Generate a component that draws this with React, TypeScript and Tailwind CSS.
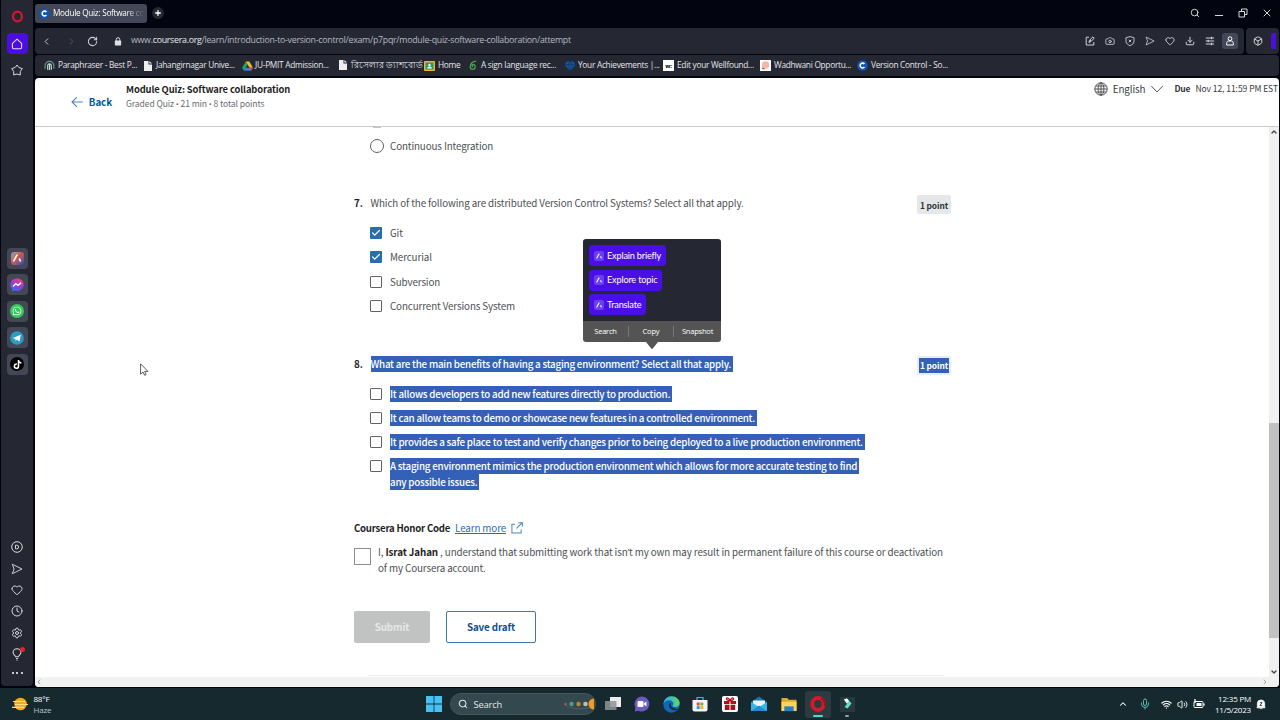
import type { ReactNode } from 'react';
import {
  Camera,
  Check,
  ChevronDown,
  ChevronLeft,
  ChevronRight,
  ChevronUp,
  Clock,
  Download,
  Heart,
  Mic,
  Plus,
  RotateCw,
  Search,
  Settings,
  Volume2,
  Wifi,
  X,
  Box,
} from 'lucide-react';
import { FaTiktok, FaWhatsapp } from 'react-icons/fa';

const bookmarks = [
  { label: 'Paraphraser - Best P...', icon: 'quill', width: 'w-[100px]', gap: 'gap-[3px]' },
  { label: 'Jahangirnagar Unive...', icon: 'file', width: 'w-[98px]', gap: 'gap-[4px]' },
  { label: 'JU-PMIT Admission...', icon: 'drive', width: 'w-[97px]', gap: 'gap-[2px]' },
  { label: 'রিসেলার ড্যাশবোর্ড', icon: 'file', width: 'w-[85px] text-[8.7px] tracking-normal', gap: 'gap-[4px]' },
  { label: 'Home', icon: 'classroom', width: 'w-[44px]', gap: 'gap-[3px]' },
  { label: 'A sign language rec...', icon: 'leaf', width: 'w-[96px]', gap: 'gap-[3px]' },
  { label: 'Your Achievements |...', icon: 'gem', width: 'w-[99px]', gap: 'gap-[2px]' },
  { label: 'Edit your Wellfound...', icon: 'well', width: 'w-[97px]', gap: 'gap-[3px]' },
  { label: 'Wadhwani Opportu...', icon: 'wadhwani', width: 'w-[97px]', gap: 'gap-[3px]' },
  { label: 'Version Control - So...', icon: 'coursera', width: 'w-[100px]', gap: 'gap-[3px]' },
];

const q7 = [
  { label: 'Git', checked: true },
  { label: 'Mercurial', checked: true },
  { label: 'Subversion', checked: false },
  { label: 'Concurrent Versions System', checked: false },
];

const q8 = [
  'It allows developers to add new features directly to production.',
  'It can allow teams to demo or showcase new features in a controlled environment.',
  'It provides a safe place to test and verify changes prior to being deployed to a live production environment.',
];

function CourseraMark() {
  return (
    <svg viewBox="0 0 12 12" className="size-[11px] shrink-0">
      <circle cx="6" cy="6" r="5.8" fill="#0f55b8" />
      <path d="M8.1 4.4A2.6 2.6 0 1 0 8.1 7.6" fill="none" stroke="#fff" strokeWidth="1.7" />
    </svg>
  );
}

function BookmarkIcon({ name }: { name: string }) {
  switch (name) {
    case 'quill':
      return (
        <svg viewBox="0 0 12 12" className="size-[11px] shrink-0" fill="none" strokeWidth="1.3">
          <path d="M1.2 9.5V6.2A4.8 4.8 0 0 1 10.8 6.2V9.5" stroke="#5b9c8a" />
          <path d="M4 10.5V6.3a2 2 0 0 1 4 0v4.2M6 4v7" stroke="#b9d8cd" />
        </svg>
      );
    case 'file':
      return (
        <svg viewBox="0 0 8 10" className="h-[10px] w-[8px] shrink-0">
          <path d="M0 0h4.5v3.5H8V10H0z" fill="#eee" />
          <path d="M5.4 0L8 2.6H5.4z" fill="#eee" />
        </svg>
      );
    case 'drive':
      return (
        <svg viewBox="0 0 12 11" className="h-[10px] w-[11px] shrink-0">
          <path d="M4 .5h4L12 7.4H8.3z" fill="#f6bd16" />
          <path d="M4 .5L6.1 4 2.1 10.7 0 7.4z" fill="#24a35a" />
          <path d="M4 7.4h8l-2.1 3.3H2.1z" fill="#3c7be8" />
          <path d="M8.3 7.4H12l-2.1 3.3z" fill="#e8453c" />
        </svg>
      );
    case 'classroom':
      return (
        <svg viewBox="0 0 11 10" className="h-[10px] w-[11px] shrink-0">
          <rect width="11" height="10" rx="1" fill="#f0b92c" />
          <rect x="1.4" y="1.4" width="8.2" height="7.2" fill="#2e9a56" />
          <circle cx="5.5" cy="4" r="1.2" fill="#fff" />
          <path d="M3.2 7.4c0-2.4 4.6-2.4 4.6 0z" fill="#fff" />
        </svg>
      );
    case 'leaf':
      return (
        <svg viewBox="0 0 10 12" className="h-[11px] w-[10px] shrink-0" fill="none" stroke="#46a84b" strokeWidth="1.4">
          <path d="M8.3 1.2C4.6 1.6 2 4.2 2 7.6a2.7 2.7 0 1 0 2.9-2.8C3.6 5 3.8 7 5 7.4" />
        </svg>
      );
    case 'gem':
      return (
        <svg viewBox="0 0 12 11" className="h-[10px] w-[12px] shrink-0">
          <path d="M2.5.5h7L12 4 6 11 0 4z" fill="#15569f" />
          <path d="M0 4h12M3.5 4L6 .5 8.5 4 6 11z" fill="none" stroke="#0c2f60" strokeWidth=".7" />
        </svg>
      );
    case 'well':
      return (
        <span className="flex size-[11px] shrink-0 items-center justify-center bg-white text-[6px] leading-none font-bold text-black">
          w:
        </span>
      );
    case 'wadhwani':
      return (
        <svg viewBox="0 0 11 11" className="size-[11px] shrink-0">
          <rect width="11" height="11" fill="#fff" />
          <circle cx="5.5" cy="5" r="3.7" fill="#efb9a6" />
          <path d="M2 8l2.5 1" stroke="#c33" strokeWidth="1.2" />
        </svg>
      );
    default:
      return <CourseraMark />;
  }
}

function AriaMark({ className }: { className: string }) {
  return (
    <svg viewBox="0 0 10 10" className={className} fill="none" stroke="#fff" strokeWidth="1.4" strokeLinecap="round">
      <path d="M2.3 7.4L5 2.6M7.1 5.9L7.8 7.3" />
    </svg>
  );
}

function SideTile({ children }: { children: ReactNode }) {
  return <div className="flex size-[21px] items-center justify-center rounded-[4px] bg-[#434756]">{children}</div>;
}

function SendIcon({ className }: { className: string }) {
  return (
    <svg viewBox="0 0 14 14" className={className} fill="none" stroke="currentColor" strokeWidth="1.1" strokeLinejoin="round">
      <path d="M1.5 1.5L12.8 7 1.5 12.5 3.6 7z" />
    </svg>
  );
}

function Sidebar() {
  return (
    <aside className="ml-px flex h-[686px] w-[32px] shrink-0 flex-col items-center rounded-b-[4px] bg-[#252833] text-[#d6d8de]">
      <svg viewBox="0 0 12 12" className="mt-[10px] size-[13px]" fill="none" stroke="#d9142f">
        <ellipse cx="6" cy="6" rx="4.1" ry="4.5" strokeWidth="2" />
      </svg>
      <div className="mt-[10px] flex size-[21px] items-center justify-center rounded-[4px] bg-[#4a0fe0]">
        <svg viewBox="0 0 12 12" className="size-[12px]" fill="none" stroke="#e6dcff" strokeWidth="1.1" strokeLinejoin="round">
          <path d="M1.4 5.3L6 1.2l4.6 4.1V9.6a1.2 1.2 0 0 1-1.2 1.2H2.6a1.2 1.2 0 0 1-1.2-1.2z" />
        </svg>
      </div>
      <svg viewBox="0 0 12 12" className="mt-[10px] size-[12px]" fill="none" stroke="currentColor" strokeWidth="1" strokeLinejoin="round">
        <path d="M6 1L7.8 3.5 11.3 4.6 9.3 7.4 9.3 11 6 10 2.7 11 2.7 7.4.7 4.6 4.2 3.5z" />
      </svg>

      <div className="mt-[171.5px] flex flex-col gap-[5.6px]">
        <SideTile>
          <span className="flex size-[13px] items-center justify-center rounded-[3px] bg-linear-to-br from-[#64a5c0] via-[#d5523f] via-45% to-[#1b33c7]">
            <AriaMark className="size-[12px]" />
          </span>
        </SideTile>
        <SideTile>
          <svg viewBox="0 0 14 14" className="size-[14px]">
            <defs>
              <linearGradient id="msg" x1="0.2" y1="1" x2="0.7" y2="0">
                <stop offset="0" stopColor="#1a7df5" />
                <stop offset="0.5" stopColor="#9a35e8" />
                <stop offset="1" stopColor="#f0486f" />
              </linearGradient>
            </defs>
            <path d="M7 .4C3.1.4.3 3.2.3 6.7c0 1.9.8 3.5 2 4.6v2.3l2.2-1.1c.8.3 1.6.4 2.5.4 3.9 0 6.7-2.8 6.7-6.2S10.9.4 7 .4z" fill="url(#msg)" />
            <path d="M3 8.6L5.7 5.7 8 7.4 11 4.9" fill="none" stroke="#fff" strokeWidth="1.5" />
          </svg>
        </SideTile>
        <SideTile>
          <span className="flex size-[14px] items-center justify-center rounded-full bg-[#32cb59] text-white">
            <FaWhatsapp size={10} />
          </span>
        </SideTile>
        <SideTile>
          <svg viewBox="0 0 14 14" className="size-[14px]">
            <circle cx="7" cy="7" r="6.8" fill="#2c9cc4" />
            <path d="M2.8 7L10.8 3.8 9.5 10.5 6.8 8.7 5.6 9.9 5.3 7.9z" fill="#fff" />
          </svg>
        </SideTile>
        <SideTile>
          <span className="flex size-[14px] items-center justify-center rounded-full bg-black text-white">
            <FaTiktok size={9} />
          </span>
        </SideTile>
      </div>

      <div className="mt-[166.5px] flex flex-col items-center gap-[9.3px]">
        <svg viewBox="0 0 12 12" className="size-[12px]" fill="none" stroke="currentColor" strokeWidth="1">
          <circle cx="6" cy="6" r="5.3" />
          <path d="M4.5 4.2h1.3a1.8 1.8 0 0 1 0 3.6H4.5z" />
        </svg>
        <SendIcon className="size-[12px]" />
        <Heart className="size-[12px]" strokeWidth={2} />
        <Clock className="size-[12px]" strokeWidth={2} />
        <Settings className="size-[12px]" strokeWidth={2} />
        <div className="relative">
          <svg viewBox="0 0 12 14" className="h-[13px] w-[12px]" fill="none" stroke="currentColor" strokeWidth="1.1">
            <path d="M4.5 9.3C4.5 8 1.8 7.4 1.8 4.9a4.2 4.2 0 0 1 8.4 0C10.2 7.4 7.5 8 7.5 9.3zM5 11.3h2M5.3 13h1.4" />
          </svg>
          <span className="absolute -top-px right-[-2px] size-[5px] rounded-full bg-[#e8232d]" />
        </div>
        <div className="mt-[2px] flex gap-[2.5px]">
          <span className="size-[2px] rounded-full bg-white" />
          <span className="size-[2px] rounded-full bg-white" />
          <span className="size-[2px] rounded-full bg-white" />
        </div>
      </div>
    </aside>
  );
}

function TabStrip() {
  return (
    <div className="flex h-[28px] items-center text-white">
      <div className="mt-[-2px] flex h-[19px] w-[112px] items-center gap-[3px] rounded-[3px] bg-[#434757] pl-[4px]">
        <CourseraMark />
        <span className="mask-r-from-80% text-[8.2px] tracking-[-0.27px] whitespace-nowrap">Module Quiz: Software co</span>
      </div>
      <div className="mt-[-2px] ml-[5px] flex size-[12px] items-center justify-center rounded-full bg-[#252833]">
        <Plus className="size-[8px]" strokeWidth={4} />
      </div>
      <div className="mt-[-3px] mr-[6px] ml-auto flex items-center gap-[15px] text-[#d6d8de]">
        <Search className="size-[10px]" strokeWidth={2.3} />
        <span className="mt-[6px] h-px w-[8px] bg-[#d6d8de]" />
        <svg viewBox="0 0 10 10" className="size-[10px]" fill="none" stroke="currentColor">
          <path d="M1 3.5h5.5V9H1zM3.5 3.5V1H9v5.5H6.5" />
        </svg>
        <X className="-ml-[2px] size-[12px]" strokeWidth={2} />
      </div>
    </div>
  );
}

function AddressBar() {
  return (
    <div className="flex h-[26px] gap-[2px] text-[#cfd1d8]">
      <div className="flex w-[1209px] items-center rounded-[4px] bg-[#252833]">
        <ChevronLeft className="ml-[6px] size-[11px]" />
        <ChevronRight className="ml-[14px] size-[11px] text-[#565a67]" />
        <RotateCw className="ml-[10px] size-[11px]" strokeWidth={2.2} />
        <svg viewBox="0 0 8 10" className="ml-[16px] h-[9px] w-[8px] text-[#dddfe4]">
          <rect x=".5" y="4" width="7" height="5.5" rx=".8" fill="currentColor" />
          <path d="M2 4.5V2.8a2 2 0 0 1 4 0v1.7" fill="none" stroke="currentColor" strokeWidth="1.1" />
        </svg>
        <span className="ml-[9px] text-[8.8px] tracking-[-0.27px] whitespace-nowrap text-[#b5b8c2]">
          www.<span className="text-[#e9eaee]">coursera.org</span>
          /learn/introduction-to-version-control/exam/p7pqr/module-quiz-software-collaboration/attempt
        </span>
        <div className="mr-[6px] ml-auto flex items-center gap-[10px]">
          <svg viewBox="0 0 10 10" className="size-[10px]" fill="none" stroke="currentColor" strokeWidth="1">
            <path d="M4 1.2H1.2V9h7.6V6M4 6.3l.4-1.9L8 .8l1.3 1.3-3.5 3.6zM4 6.3L6 4" />
          </svg>
          <Camera className="size-[10px]" />
          <svg viewBox="0 0 10 10" className="size-[10px]" fill="none" stroke="currentColor" strokeWidth=".9">
            <path d="M5 .6l4 1.1v3.5C9 7.5 7 9 5 9.6 3 9 1 7.5 1 5.2V1.7zM3.8 3.8l2.4 2.4M6.2 3.8L3.8 6.2" />
          </svg>
          <SendIcon className="size-[10px]" />
          <Heart className="size-[10px]" strokeWidth={2.2} />
          <Download className="size-[10px]" strokeWidth={2.4} />
          <svg viewBox="0 0 10 10" className="size-[10px]" stroke="currentColor" strokeWidth="1.1">
            <path d="M.8 2h8.4M.8 5h8.4M.8 8h8.4M6.5.8v2.4M3.2 3.8v2.4M6.5 6.8v2.4" />
          </svg>
          <div className="-ml-[3px] flex size-[16px] items-center justify-center rounded-[3px] bg-[#434757] text-white">
            <svg viewBox="0 0 10 10" className="size-[10px]" fill="none" stroke="currentColor" strokeWidth="1">
              <circle cx="5" cy="2.7" r="1.9" />
              <path d="M3.5 5h3C8 5 8.6 7 8.3 9H1.7C1.4 7 2 5 3.5 5z" />
            </svg>
          </div>
        </div>
      </div>
      <div className="flex w-[33px] items-center rounded-[4px] bg-[#252833]">
        <Box className="ml-[7px] size-[10px]" strokeWidth={2.4} />
        <span className="ml-auto h-[16px] w-[5px] rounded-l-[2px] bg-[#4a12d8]" />
        <span className="w-[3px]" />
      </div>
    </div>
  );
}

function BookmarksBar() {
  return (
    <div className="mt-px flex h-[21px] items-center rounded-[4px] bg-[#252833] pl-[9px] text-[8.3px] tracking-[-0.27px] text-[#e4e5ea]">
      {bookmarks.map((b) => (
        <div key={b.label} className={`flex shrink-0 items-center whitespace-nowrap ${b.width} ${b.gap}`}>
          <BookmarkIcon name={b.icon} />
          <span>{b.label}</span>
        </div>
      ))}
    </div>
  );
}

// the CJK face draws • and ’ full-width, so these come from a Latin font
function Dot() {
  return <span className="font-['Open_Sans',sans-serif] text-[8px]">•</span>;
}

function QuizHeader() {
  return (
    <header className="flex h-[49px] shrink-0 border-b border-[#c9c9c9] text-[#373a3c]">
      <div className="mt-[17px] ml-[36px] flex h-[14px] w-[41px] items-center gap-[6px] text-[#0056a8]">
        <svg viewBox="0 0 12 12" className="size-[12px]" fill="none" stroke="#4d86ba" strokeWidth="1.1">
          <path d="M12 6H1M6 1L1 6l5 5" />
        </svg>
        <span className="text-[9.8px] font-bold tracking-[-0.1px]">Back</span>
      </div>
      <div className="mt-[4px] ml-[14px] flex flex-col whitespace-nowrap">
        <span className="text-[9.4px] leading-[14px] font-semibold tracking-[-0.12px] text-[#1f1f1f]">
          Module Quiz: Software collaboration
        </span>
        <span className="text-[8.6px] leading-[15px] tracking-[-0.11px] text-[#6b6d70]">
          Graded Quiz <Dot /> 21 min <Dot /> 8 total points
        </span>
      </div>
      <div className="mt-[4px] ml-auto flex h-[14px] items-center whitespace-nowrap">
        <svg viewBox="0 0 14 14" className="size-[14px]" fill="none" stroke="#444" strokeWidth=".9">
          <circle cx="7" cy="7" r="6.2" />
          <ellipse cx="7" cy="7" rx="2.9" ry="6.2" />
          <path d="M7 .8v12.4M.8 7h12.4M1.7 4h10.6M1.7 10h10.6" />
        </svg>
        <span className="ml-[5px] text-[9.8px] tracking-[-0.1px]">English</span>
        <svg viewBox="0 0 12 8" className="ml-[6px] h-[8px] w-[12px]" fill="none" stroke="#444" strokeWidth=".9">
          <path d="M.3 1L6 7l5.7-6" />
        </svg>
        <span className="-mt-[2px] ml-[11px] text-[8.5px] font-bold tracking-[-0.15px]">Due</span>
        <span className="-mt-[2px] mr-px ml-[5px] text-[8.5px] tracking-[-0.05px]">Nov 12, 11:59 PM EST</span>
      </div>
    </header>
  );
}

function Checkbox({ checked = false }: { checked?: boolean }) {
  return checked ? (
    <span className="flex size-[12px] shrink-0 items-center justify-center rounded-[1px] bg-[#2a6cb0] text-white">
      <Check className="size-[10px]" strokeWidth={3} />
    </span>
  ) : (
    <span className="size-[12px] shrink-0 rounded-[1px] border-[1.5px] border-[#5f6164] bg-white" />
  );
}

function Marked({ children }: { children: ReactNode }) {
  return (
    <span className="inline-block h-[16px] bg-[#3461b8] pr-[2px] font-medium tracking-[-0.23px] text-white">{children}</span>
  );
}

function Quiz() {
  return (
    <div className="flex flex-1 flex-col overflow-hidden pl-[319px] text-[9.8px] leading-[16px] tracking-[-0.11px] whitespace-nowrap text-[#4c4f52]">
      <div className="ml-[19px] h-px w-[8px] shrink-0 bg-[#c4c4c4]" />
      <div className="mt-[10px] ml-[15.5px] flex h-[16px] items-center gap-[6.5px]">
        <span className="-mt-px size-[14px] rounded-full border-[1.5px] border-[#5f6164]" />
        <span>Continuous Integration</span>
      </div>

      <div className="mt-[41px] flex h-[19px] w-[597px]">
        <span className="w-[16.5px] font-bold text-[#1f1f1f]">7.</span>
        <span>Which of the following are distributed Version Control Systems? Select all that apply.</span>
        <span className="ml-auto flex h-[19px] w-[34px] items-center justify-center rounded-[2px] bg-[#e5e8ea] text-[8.4px] font-bold text-[#333]">
          1 point
        </span>
      </div>
      <div className="mt-[11.3px] ml-[16.4px] flex flex-col gap-[8.2px]">
        {q7.map((o) => (
          <div key={o.label} className="flex h-[16px] items-center gap-[7.6px]">
            <Checkbox checked={o.checked} />
            <span>{o.label}</span>
          </div>
        ))}
      </div>

      <div className="mt-[41.7px] flex h-[19px] w-[597px]">
        <span className="w-[16.5px] font-bold text-[#1f1f1f]">8.</span>
        <Marked>What are the main benefits of having a staging environment? Select all that apply.</Marked>
        <span className="ml-auto flex h-[19px] w-[34px] items-center justify-center rounded-[2px] bg-[#e5edf7]">
          <span className="h-[15px] bg-[#3461b8] px-px text-[8.4px] leading-[15px] font-bold text-white">1 point</span>
        </span>
      </div>
      <div className="mt-[11px] ml-[16.4px] flex flex-col gap-[8px]">
        {q8.map((label) => (
          <div key={label} className="flex h-[16px] items-center gap-[7.6px]">
            <Checkbox />
            <Marked>{label}</Marked>
          </div>
        ))}
        <div className="flex gap-[7.6px]">
          <span className="flex h-[16px] items-center">
            <Checkbox />
          </span>
          <div className="flex flex-col items-start">
            <Marked>A staging environment mimics the production environment which allows for more accurate testing to find</Marked>
            <Marked>any possible issues.</Marked>
          </div>
        </div>
      </div>

      <div className="mt-[30px] flex h-[16px] items-center">
        <span className="text-[9.6px] font-semibold tracking-[-0.23px] text-[#1f1f1f]">Coursera Honor Code</span>
        <span className="ml-[5px] text-[#2a6cb0] underline underline-offset-1">Learn more</span>
        <svg viewBox="0 0 13 13" className="ml-[5px] size-[12px]" fill="none" stroke="#4d86ba" strokeWidth="1.1">
          <path d="M4.5 2.5H1V12h10V8M8 .7h4.3V5M12.3.7L6 7" />
        </svg>
      </div>
      <div className="mt-[8px] flex h-[32px]">
        <span className="mt-[4px] size-[17px] shrink-0 border border-[#8a8c8e]" />
        <div className="ml-[7px] flex flex-col">
          <div className="h-[16px] tracking-[-0.105px]">
            I, <b className="text-[#1f1f1f]">Israt Jahan</b> , understand that submitting work that isn
            <span className="font-['Open_Sans',sans-serif] leading-none">’</span>t my own may result in permanent failure of this
            course or deactivation
          </div>
          <div>of my Coursera account.</div>
        </div>
      </div>

      <div className="mt-[35px] flex gap-[16px] font-bold">
        <button className="h-[32px] w-[76px] rounded-[2px] bg-[#c1c3c3] text-[#e6e7e7]">Submit</button>
        <button className="h-[32px] w-[90px] rounded-[2px] border border-[#3f76ac] text-[#0f4f94]">Save draft</button>
      </div>
      <div className="mt-[32px] ml-[14px] h-px w-[576px] shrink-0 bg-[#ececec]" />
    </div>
  );
}

function SelectionPopup() {
  return (
    <div className="absolute top-[239px] left-[583px] w-[138px] font-['Lato',sans-serif]">
      <div className="flex h-[82px] flex-col items-start gap-[4px] rounded-t-[3px] bg-[#252833] pt-[6px] pl-[6px]">
        {['Explain briefly', 'Explore topic', 'Translate'].map((label) => (
          <button
            key={label}
            className="-mb-[0.3px] flex h-[21px] items-center gap-[3px] rounded-[4px] bg-[#4a0fe8] pr-[5px] pl-[5px] text-[9.2px] tracking-[-0.2px] text-white"
          >
            <span className="flex size-[10px] items-center justify-center rounded-[2px] bg-[#6a3ff0]">
              <AriaMark className="size-[8px]" />
            </span>
            {label}
          </button>
        ))}
      </div>
      <div className="flex h-[21px] items-center rounded-b-[3px] bg-[#545454] font-['Open_Sans',sans-serif] text-[7.5px] tracking-[-0.2px] text-white">
        <span className="w-[45px] text-center">Search</span>
        <span className="h-[11px] w-px bg-[#777]" />
        <span className="w-[44px] text-center">Copy</span>
        <span className="h-[11px] w-px bg-[#777]" />
        <span className="w-[47px] text-center">Snapshot</span>
      </div>
      <svg viewBox="0 0 12 7" className="ml-[63px] h-[7px] w-[12px]">
        <path d="M0 0h12L7 6.3a1.3 1.3 0 0 1-2 0z" fill="#545454" />
      </svg>
    </div>
  );
}

function TaskbarApps() {
  return (
    <div className="flex items-center">
      <svg viewBox="0 0 16 16" className="size-[16px]">
        <path d="M0 0h7.6v7.6H0zM8.4 0H16v7.6H8.4zM0 8.4h7.6V16H0zM8.4 8.4H16V16H8.4z" fill="#45c1f5" />
      </svg>
      <div className="ml-[8px] flex h-[22px] w-[146px] items-center rounded-full border border-[#40565b] bg-[#34494f] pl-[7px] text-[#e1e5e6]">
        <Search className="size-[10px]" strokeWidth={2.5} />
        <span className="ml-[6px] text-[9.3px] tracking-[-0.15px]">Search</span>
        <svg viewBox="0 0 32 12" className="ml-auto h-[12px] w-[32px]">
          <path d="M1 6.5q10 7 26 3" stroke="#56686d" fill="none" strokeWidth=".7" />
          <circle cx="2.5" cy="6" r="1.3" fill="#b5563f" />
          <circle cx="8.5" cy="6" r="2.2" fill="#4c9b8c" />
          <circle cx="15.5" cy="6" r="2.2" fill="#c08438" />
          <circle cx="22.5" cy="6" r="2.3" fill="#b9bfb8" />
          <path d="M31 .5a5.5 5.5 0 0 0 0 11z" fill="#f39a1f" />
        </svg>
      </div>
      <svg viewBox="0 0 16 16" className="ml-[9px] size-[16px]">
        <path d="M5 1h11v10H5z" fill="#ececec" />
        <path d="M0 5h11.5v9H0z" fill="#8e9496" opacity=".85" />
      </svg>
      <svg viewBox="0 0 16 16" className="ml-[13px] size-[16px]">
        <path d="M8 .5a7.5 7.5 0 1 1-3.5 14.2L.8 15.5l.6-4A7.5 7.5 0 0 1 8 .5z" fill="#6a5bc0" />
        <rect x="3.5" y="5" width="6" height="6" rx="1" fill="#fff" />
        <path d="M10 7.3L12.5 5.5v5L10 8.7z" fill="#fff" />
      </svg>
      <svg viewBox="0 0 16 16" className="ml-[13px] size-[17px]">
        <defs>
          <linearGradient id="edge" x1="0" y1="0.3" x2="1" y2="0.3">
            <stop offset="0" stopColor="#29a9e8" />
            <stop offset="1" stopColor="#5bd66a" />
          </linearGradient>
        </defs>
        <circle cx="8" cy="8" r="7.7" fill="#1266b8" />
        <path d="M.3 8C.5 3.5 4 .3 8 .3c4.5 0 7.7 3.3 7.7 6.2 0 2.4-1.7 3.9-4 3.9-1.9 0-2.7-.8-2.7-1.4 0-.5.8-.8.8-2C9.8 5.4 8.2 4 6 4 3 4 .8 5.5.3 8z" fill="url(#edge)" />
        <path d="M6.5 6.5c-2 3 .5 7 5 6.8 1.5 0 2.5-.7 3-1.2-1 .2-5.5.5-7-2.6-.5-1.1-.3-2-.3-2.7z" fill="#15292f" />
      </svg>
      <svg viewBox="0 0 16 16" className="ml-[12px] size-[16px]">
        <path d="M5 4V1.5h6V4" fill="none" stroke="#44b5d8" strokeWidth="1.2" />
        <path d="M.5 4h15v9.5A2 2 0 0 1 13.5 15.5h-11A2 2 0 0 1 .5 13.5z" fill="#f2f4f5" />
        <path d="M4.7 6.5h3v3h-3z" fill="#e2512f" />
        <path d="M8.3 6.5h3v3h-3z" fill="#79b530" />
        <path d="M4.7 10.1h3v3h-3z" fill="#2a9be0" />
        <path d="M8.3 10.1h3v3h-3z" fill="#f0b722" />
      </svg>
      <svg viewBox="0 0 16 16" className="ml-[14px] size-[16px]">
        <rect width="16" height="16" rx="2" fill="#fff" />
        <path d="M2 5h5.5v3H2zM8.5 5H14v3H8.5zM2.8 8.8h4.7V14H2.8zM8.5 8.8h4.7V14H8.5z" fill="#a8141e" />
        <path d="M8 4.6C6.5 1 4 1.5 4.5 3.3 5 4.6 7 4.6 8 4.6c1 0 3 0 3.5-1.3C12 1.5 9.5 1 8 4.6z" fill="none" stroke="#a8141e" strokeWidth="1.2" />
      </svg>
      <svg viewBox="0 0 18 16" className="ml-[12px] h-[16px] w-[18px]">
        <path d="M1 6l8-5.5L17 6v9H1z" fill="#1c6fb0" />
        <path d="M3 4.5h12V10H3z" fill="#e6f4fb" />
        <path d="M1 6l8 5 8-5v9H1z" fill="#39b4ea" />
        <path d="M1 15l8-5 8 5z" fill="#1c8fd6" />
      </svg>
      <svg viewBox="0 0 18 16" className="ml-[12px] h-[15px] w-[18px]">
        <path d="M1 1h6l2 2h8v12H1z" fill="#e3a52a" />
        <path d="M1 5h16v10H1z" fill="#fbd45e" />
        <path d="M4 10h10v5H4z" fill="#2b7fc8" />
      </svg>
      <div className="ml-[7px] flex h-[27px] w-[26px] flex-col items-center rounded-[3px] bg-[#2c3b40]">
        <svg viewBox="0 0 16 16" className="mt-[5px] size-[16px]">
          <ellipse cx="8" cy="8" rx="5.7" ry="6" fill="none" stroke="#d51a2b" strokeWidth="4" />
          <path d="M11 2c3 2 4 5 3.5 8" stroke="#8f0f1b" strokeWidth="1.5" fill="none" />
        </svg>
        <span className="mt-[3px] h-[2px] w-[10px] rounded-full bg-[#57d6cf]" />
      </div>
      <div className="ml-[9px] flex h-[27px] w-[15px] flex-col items-center">
        <div className="mt-[6px] flex h-[15px] w-[15px] items-center justify-center bg-[#26393f]">
          <svg viewBox="0 0 12 12" className="size-[12px]">
            <path d="M3 1.5L6 .5 10.5 5.5 6.5 10.5 3.5 9 6 6z" fill="#63e0c0" />
            <path d="M3 1.5L6 .5 8 3 5.5 5z" fill="#fff" />
          </svg>
        </div>
        <span className="mt-[3px] h-[2px] w-[4px] rounded-full bg-[#93a2a6]" />
      </div>
    </div>
  );
}

function Taskbar() {
  return (
    <footer className="flex h-[32px] w-full items-center bg-[#15292f] text-[8px] leading-[11px] tracking-[-0.2px] text-white">
      <svg viewBox="0 0 17 14" className="ml-[12px] h-[14px] w-[17px]">
        <circle cx="8.5" cy="7" r="6.3" fill="#f5a623" />
        <path d="M1 4.5h12M3 7.5h13M0 10.3h12" stroke="#ffe08a" strokeWidth="1.2" />
      </svg>
      <div className="mt-[-1px] ml-[4.5px] w-[387px] whitespace-nowrap">
        <div>88°F</div>
        <div className="text-[#b9c2c5]">Haze</div>
      </div>
      <div className="ml-[5px]">
        <TaskbarApps />
      </div>
      <div className="mr-[14px] ml-auto flex items-center">
        <ChevronUp className="size-[10px]" strokeWidth={2.5} />
        <Mic className="ml-[11px] size-[12px] text-[#56bdb0]" />
        <Wifi className="ml-[10px] size-[11px]" strokeWidth={2.5} />
        <Volume2 className="ml-[5px] size-[11px]" strokeWidth={2} />
        <svg viewBox="0 0 12 10" className="ml-[5px] h-[10px] w-[12px]">
          <rect x="1" y="2.5" width="9" height="6" rx="1" fill="none" stroke="#fff" />
          <rect x="3.5" y="4" width="5" height="3" fill="#fff" />
          <path d="M11 4.5v2M2 0v4" stroke="#fff" strokeWidth="1.3" />
        </svg>
        <div className="mt-[-1px] ml-[6.5px] w-[40px] text-right whitespace-nowrap">
          <div>12:35 PM</div>
          <div>11/5/2023</div>
        </div>
        <svg viewBox="0 0 10 12" className="ml-[5px] h-[11px] w-[10px]">
          <path d="M1 9V5a4 4 0 0 1 8 0v4l.6.6H.4zM3.5 10.5h3" fill="#fff" stroke="#fff" strokeWidth=".8" />
          <path d="M3.8 4h2.4L3.8 7h2.4" fill="none" stroke="#15292f" strokeWidth=".9" />
        </svg>
      </div>
    </footer>
  );
}

export default function App() {
  return (
    <div className="relative flex h-[720px] w-[1280px] flex-col overflow-hidden bg-[#02040f] font-['Open_Sans',sans-serif]">
      <div className="flex h-[688px]">
        <Sidebar />
        <div className="ml-[2px] flex flex-1 flex-col pr-px">
          <TabStrip />
          <AddressBar />
          <BookmarksBar />
          <div className="mt-[2px] flex h-[609px] flex-col overflow-hidden rounded-[4px] bg-white font-['Noto_Sans_CJK_SC',sans-serif]">
            <QuizHeader />
            <div className="flex h-[550px] shrink-0">
              <Quiz />
              <div className="flex w-[10px] flex-col items-center bg-[#f0f0f0] text-[#444]">
                <ChevronUp className="mt-px size-[8px]" strokeWidth={4} />
                <div className="mt-[287px] h-[215px] w-full bg-[#c1c1c1]" />
                <ChevronDown className="mt-auto mb-px size-[8px]" strokeWidth={4} />
              </div>
            </div>
            <div className="flex h-[10px] items-center justify-between bg-[#f1f1f0] pr-[10px] text-[#a3a3a3]">
              <ChevronLeft className="size-[8px]" strokeWidth={3} />
              <ChevronRight className="size-[8px]" strokeWidth={3} />
            </div>
          </div>
        </div>
      </div>
      <Taskbar />

      <SelectionPopup />
      <svg viewBox="0 0 9 13" className="absolute top-[363px] left-[140px] h-[13px] w-[9px]">
        <path d="M.6.9v10.3L3 9l1.600 3.300 1.500-.7L4.700 8.400H8z" fill="#fff" stroke="#333" strokeWidth=".8" />
      </svg>
    </div>
  );
}
